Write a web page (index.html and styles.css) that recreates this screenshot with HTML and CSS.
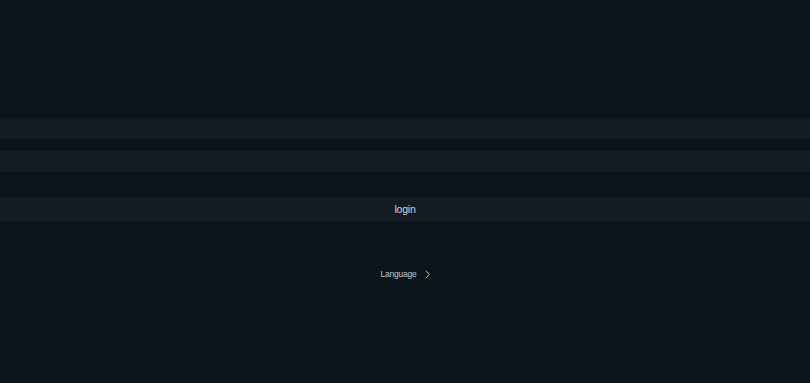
FILE: index.html
```html
<!DOCTYPE html>
<html lang="en">
<head>
    <meta charset="UTF-8">
    <meta name="viewport" content="width=device-width, initial-scale=1.0">
    <title>Login</title>
    <link rel="stylesheet" href="styles.css">
</head>
<body>
    <div class="container">
        <form class="login-form">
            <input type="text" class="field" name="username">
            <input type="password" class="field" name="password">
            <button type="submit" class="login-btn">login</button>
        </form>

        <div class="language">
            <span>Language</span>
            <svg class="chevron" width="5" height="9" viewBox="0 0 5 9">
                <path d="M0.8 0.8 L4.2 4.5 L0.8 8.2" fill="none" stroke="#c4c9cc" stroke-width="1"/>
            </svg>
        </div>
    </div>
</body>
</html>
```

FILE: styles.css
```css
html, body {
    height: 100%;
}
body {
    font-family: "Liberation Sans", Arial, sans-serif;
    background-color: #0a1419;
    color: #cdd2d5;
    margin: 0;
    padding: 0;
}
.container {
    display: flex;
    flex-direction: column;
    padding-top: 118px;
}
.login-form {
    display: flex;
    flex-direction: column;
}
.field {
    height: 21px;
    margin: 0;
    padding: 0;
    border: none;
    background-color: #131c22;
    outline: none;
}
.field + .field {
    margin-top: 12px;
}
.login-btn {
    height: 24px;
    margin-top: 25px;
    padding: 0;
    border: none;
    background-color: #131c22;
    color: #d2d6d9;
    font-family: inherit;
    font-size: 10.5px;
    letter-spacing: -0.25px;
    cursor: pointer;
}
.language {
    display: flex;
    justify-content: center;
    align-items: center;
    gap: 8px;
    margin-top: 47px;
    height: 12px;
    font-size: 8.5px;
    letter-spacing: -0.2px;
    color: #c4c9cc;
}
```
